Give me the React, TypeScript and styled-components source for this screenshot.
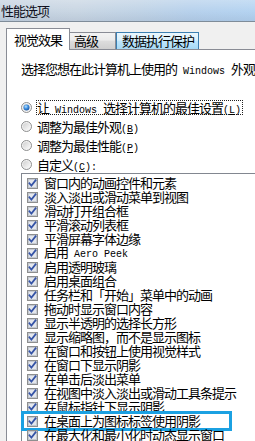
import React, { useId } from 'react';
import styled, { createGlobalStyle, css } from 'styled-components';

const Global = createGlobalStyle`
  *, *::before, *::after { box-sizing: border-box; }
  html, body { margin: 0; padding: 0; background: #f0f0f0; }
  body {
    width: 255px; height: 441px; overflow: hidden;
    font-family: "Noto Sans CJK SC", "Noto Sans", sans-serif;
    font-size: 13px; letter-spacing: -1px; color: #000;
  }
`;

const Window = styled.div`
  width: 255px;
  height: 441px;
  display: flex;
  flex-direction: column;
  overflow: hidden;
  background: #f0f0f0;
`;

const TitleBar = styled.div`
  flex: none;
  height: 22px;
  border-bottom: 1px solid #7f8c99;
  padding: 1px 0 0 1px;
  background:
    linear-gradient(180deg, rgba(255,255,255,0.25) 0%, rgba(255,255,255,0) 55%, rgba(90,110,140,0.12) 100%),
    linear-gradient(90deg, #c6d3e1 0%, #c9d6e3 30%, #c0d3e6 55%, #b7d1ec 75%, #b4d3f1 100%);
`;

const TitleText = styled.span`
  line-height: 14px;
  color: #101020;
  white-space: nowrap;
`;

const Body = styled.div`
  flex: 1;
  display: flex;
  flex-direction: column;
  padding: 6px 0 0 6px;
  min-height: 0;
`;

const TabStrip = styled.div`
  flex: none;
  height: 21px;
  display: flex;
  align-items: flex-end;
`;

type TabKind = 'active' | 'normal' | 'hot';

const Tab = styled.div<{ $kind: TabKind; $w: number }>`
  width: ${p => p.$w}px;
  display: flex;
  align-items: center;
  line-height: 14px;
  white-space: nowrap;
  ${p => p.$kind === 'active' && css`
    height: 22px;
    margin-bottom: -1px;
    position: relative;
    z-index: 1;
    background: #fff;
    border: 1px solid #898c95;
    border-bottom: none;
    padding-left: 7px;
  `}
  ${p => p.$kind === 'normal' && css`
    height: 17px;
    border-top: 1px solid #898c95;
    border-right: 1px solid #898c95;
    padding-left: 4px;
    background: linear-gradient(180deg, #f3f3f3 0%, #ebebeb 45%, #dddddd 50%, #cfcfcf 100%);
  `}
  ${p => p.$kind === 'hot' && css`
    height: 17px;
    border: 1px solid #3c7fb1;
    border-bottom: none;
    padding-left: 5px;
    background: linear-gradient(180deg, #eaf6fd 0%, #d9f0fc 45%, #bee6fd 50%, #a7d9f5 100%);
  `}
`;

const Panel = styled.div`
  flex: 1;
  background: #fff;
  border-top: 1px solid #898c95;
  border-left: 1px solid #898c95;
  padding: 12px 0 0 14px;
  display: flex;
  flex-direction: column;
`;

const Intro = styled.div`
  line-height: 14px;
  white-space: nowrap;
`;

const Latin = styled.span`
  font-family: "Liberation Mono", "DejaVu Sans Mono", monospace;
  font-size: 10px;
  letter-spacing: 0;
  white-space: pre;
`;

const RadioGroup = styled.div`
  margin-top: 21px;
  display: flex;
  flex-direction: column;
  gap: 4px;
`;

const RadioRow = styled.div`
  height: 15px;
  display: flex;
  align-items: center;
  gap: 4px;
`;

const RadioLabel = styled.span<{ $focused?: boolean }>`
  height: 15px;
  line-height: 13px;
  padding: 0 1px 0 0;
  border: 1px dotted ${p => (p.$focused ? '#222' : 'transparent')};
  white-space: nowrap;
`;

const ListBox = styled.div`
  flex: none;
  margin-top: 1px;
  height: 270px;
  border-top: 1px solid #828790;
  border-left: 1px solid #828790;
  border-bottom: 1px solid #828790;
  padding-top: 2px;
  display: flex;
  flex-direction: column;
`;

const Item = styled.div<{ $highlight?: boolean }>`
  flex: none;
  height: 14px;
  display: flex;
  align-items: center;
  gap: 6px;
  padding-left: 5px;
  line-height: 14px;
  white-space: nowrap;
  position: relative;
  ${p => p.$highlight && css`
    &::after {
      content: '';
      position: absolute;
      left: -1px;
      top: -3px;
      bottom: -3px;
      width: 211px;
      border: 3px solid #1ba1e2;
      pointer-events: none;
    }
  `}
`;

const Radio: React.FC<{ checked?: boolean }> = ({ checked }) => {
  const id = useId().replace(/:/g, '');
  return (
    <svg width="11" height="11" viewBox="0 0 11 11" style={{ flex: 'none' }}>
      <defs>
        <linearGradient id={`rf${id}`} x1="0" y1="0" x2="1" y2="1">
          <stop offset="0" stopColor="#d0d0d0" />
          <stop offset="1" stopColor="#fbfbfb" />
        </linearGradient>
        <radialGradient id={`rd${id}`} cx="0.4" cy="0.35" r="0.7">
          <stop offset="0" stopColor="#b9e3ff" />
          <stop offset="0.5" stopColor="#3d8fe0" />
          <stop offset="1" stopColor="#174f9c" />
        </radialGradient>
      </defs>
      <circle cx="5.5" cy="5.5" r="5" fill="#f4f4f4" stroke="#8e8f8f" />
      <circle cx="5.5" cy="5.5" r="3.6" fill={`url(#rf${id})`} />
      {checked && <circle cx="5.5" cy="5.5" r="3" fill={`url(#rd${id})`} />}
    </svg>
  );
};

const Check: React.FC = () => (
  <svg width="11" height="11" viewBox="0 0 11 11" style={{ flex: 'none' }}>
    <rect x="0.5" y="0.5" width="10" height="10" fill="#f6f6f6" stroke="#8e8f8f" />
    <rect x="1.5" y="1.5" width="8" height="8" fill="#e4e7ec" stroke="#c4c9d1" />
    <path d="M2.4 5.3 L4.4 7.6 L8.6 2.3" fill="none" stroke="#3453a6" strokeWidth="1.7" strokeLinecap="square" />
  </svg>
);

const items: React.ReactNode[] = [
  '窗口内的动画控件和元素',
  '淡入淡出或滑动菜单到视图',
  '滑动打开组合框',
  '平滑滚动列表框',
  '平滑屏幕字体边缘',
  <>启用<Latin> Aero Peek</Latin></>,
  '启用透明玻璃',
  '启用桌面组合',
  '任务栏和「开始」菜单中的动画',
  '拖动时显示窗口内容',
  '显示半透明的选择长方形',
  '显示缩略图，而不是显示图标',
  '在窗口和按钮上使用视觉样式',
  '在窗口下显示阴影',
  '在单击后淡出菜单',
  '在视图中淡入淡出或滑动工具条提示',
  '在鼠标指针下显示阴影',
  '在桌面上为图标标签使用阴影',
  '在最大化和最小化时动态显示窗口',
];

export default function App() {
  return (
    <Window>
      <Global />
      <TitleBar>
        <TitleText>性能选项</TitleText>
      </TitleBar>
      <Body>
        <TabStrip>
          <Tab $kind="active" $w={64}>视觉效果</Tab>
          <Tab $kind="normal" $w={46}>高级</Tab>
          <Tab $kind="hot" $w={83}>数据执行保护</Tab>
        </TabStrip>
        <Panel>
          <Intro>选择您想在此计算机上使用的<Latin> Windows </Latin>外观</Intro>
          <RadioGroup>
            <RadioRow>
              <Radio checked />
              <RadioLabel $focused>让<Latin> Windows </Latin>选择计算机的最佳设置<Latin>(<u>L</u>)</Latin></RadioLabel>
            </RadioRow>
            <RadioRow>
              <Radio />
              <RadioLabel>调整为最佳外观<Latin>(<u>B</u>)</Latin></RadioLabel>
            </RadioRow>
            <RadioRow>
              <Radio />
              <RadioLabel>调整为最佳性能<Latin>(<u>P</u>)</Latin></RadioLabel>
            </RadioRow>
            <RadioRow>
              <Radio />
              <RadioLabel>自定义<Latin>(<u>C</u>):</Latin></RadioLabel>
            </RadioRow>
          </RadioGroup>
          <ListBox>
            {items.map((t, i) => (
              <Item key={i} $highlight={i === 17}>
                <Check />
                <span>{t}</span>
              </Item>
            ))}
          </ListBox>
        </Panel>
      </Body>
    </Window>
  );
}
